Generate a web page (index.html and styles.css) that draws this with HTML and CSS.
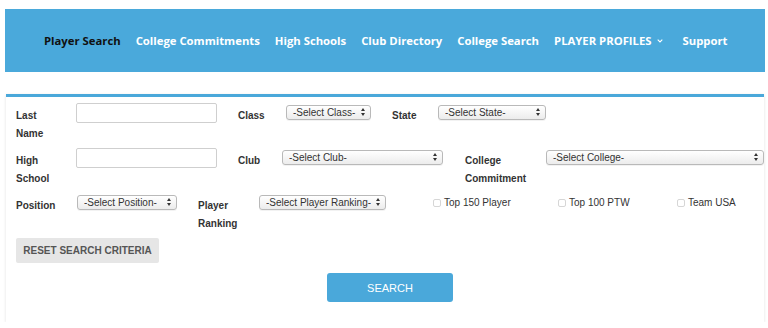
FILE: index.html
```html
<!DOCTYPE html>
<html>
<head>
<meta charset="utf-8">
<link rel="stylesheet" href="styles.css">
</head>
<body>
<div class="page">
  <nav class="nav">
    <a class="nav-item active">Player Search</a>
    <a class="nav-item">College Commitments</a>
    <a class="nav-item">High Schools</a>
    <a class="nav-item">Club Directory</a>
    <a class="nav-item">College Search</a>
    <a class="nav-item">PLAYER PROFILES <svg class="chev" width="6" height="4" viewBox="0 0 6 4"><path d="M0.7 0.7 L3 3 L5.3 0.7" fill="none" stroke="#fff" stroke-width="1.1"/></svg></a>
    <a class="nav-item">Support</a>
  </nav>

  <div class="card">
    <div class="row">
      <label class="lbl w60">Last Name</label>
      <input class="txt" type="text">
      <label class="lbl ml21 w48">Class</label>
      <span class="sel w85"><select><option>-Select Class-</option></select></span>
      <label class="lbl ml21 w46">State</label>
      <span class="sel w108"><select><option>-Select State-</option></select></span>
    </div>
    <div class="row">
      <label class="lbl w60">High School</label>
      <input class="txt" type="text">
      <label class="lbl ml21 w44">Club</label>
      <span class="sel w161"><select><option>-Select Club-</option></select></span>
      <label class="lbl ml22 w81">College Commitment</label>
      <span class="sel w218"><select><option>-Select College-</option></select></span>
    </div>
    <div class="row">
      <label class="lbl w61">Position</label>
      <span class="sel w100"><select><option>-Select Position-</option></select></span>
      <label class="lbl ml21 w61">Player Ranking</label>
      <span class="sel w127"><select><option>-Select Player Ranking-</option></select></span>
      <label class="chk ml47 w125"><span class="box"></span>Top 150 Player</label>
      <label class="chk w119"><span class="box"></span>Top 100 PTW</label>
      <label class="chk"><span class="box"></span>Team USA</label>
    </div>
    <button class="reset" type="button">RESET SEARCH CRITERIA</button>
    <div class="search-wrap">
      <button class="search" type="button">SEARCH</button>
    </div>
  </div>
</div>
</body>
</html>
```

FILE: styles.css
```css
html, body {
  margin: 0;
  padding: 0;
  background: #ffffff;
}

.page {
  padding: 9px 3px 0 5px;
}

.nav {
  height: 63px;
  background: #4aa9db;
  display: flex;
  align-items: center;
  gap: 15px;
  padding-left: 39px;
  font-family: "Open Sans", "DejaVu Sans", sans-serif;
  font-weight: 700;
  font-size: 11.3px;
}

.nav-item {
  color: #ffffff;
  white-space: nowrap;
  display: flex;
  align-items: center;
}

.nav-item.active {
  color: #111111;
}

.chev {
  margin-left: 5px;
  margin-right: 5px;
  margin-top: 1px;
}

.card {
  margin: 22px 1px 0 1px;
  border-top: 3px solid #4aa8da;
  background: #fff;
  box-shadow: 0 1px 3px rgba(0, 0, 0, 0.12);
  padding: 6px 10px 20px 10px;
  font-family: "Liberation Sans", Arial, sans-serif;
  color: #333;
}

.row {
  display: flex;
  align-items: flex-start;
  height: 45px;
}

.lbl {
  font-size: 10px;
  font-weight: 700;
  line-height: 18px;
  margin-top: 4px;
  color: #333;
  flex: none;
  box-sizing: border-box;
  padding-right: 16px;
}

.w44 { width: 44px; }
.w46 { width: 46px; }
.w48 { width: 48px; }
.w60 { width: 60px; }
.w61 { width: 61px; }
.w81 { width: 81px; }
.w85 { width: 85px; }
.w100 { width: 100px; }
.w108 { width: 108px; }
.w119 { width: 119px; }
.w125 { width: 125px; }
.w127 { width: 127px; }
.w161 { width: 161px; }
.w218 { width: 218px; }
.ml21 { margin-left: 21px; }
.ml22 { margin-left: 22px; }
.ml47 { margin-left: 46px; }

.txt {
  flex: none;
  width: 141px;
  height: 20px;
  box-sizing: border-box;
  border: 1px solid #cfcfcf;
  border-radius: 2px;
  background: #fff;
  margin: 0;
  padding: 0 4px;
}

.sel {
  position: relative;
  flex: none;
  display: block;
  height: 15px;
  margin-top: 2px;
}

.sel select {
  appearance: none;
  -webkit-appearance: none;
  display: block;
  width: 100%;
  height: 15px;
  box-sizing: border-box;
  margin: 0;
  padding: 0 14px 0 6px;
  border: 1px solid #b9b9b9;
  border-radius: 3px;
  background: linear-gradient(#ffffff, #ececec);
  font-family: "Liberation Sans", Arial, sans-serif;
  font-size: 10px;
  line-height: 13px;
  color: #333;
  box-shadow: 0 1px 0 rgba(0, 0, 0, 0.05);
}

.sel::before,
.sel::after {
  content: "";
  position: absolute;
  right: 6px;
  width: 0;
  height: 0;
  border-left: 2.5px solid transparent;
  border-right: 2.5px solid transparent;
  pointer-events: none;
}

.sel::before {
  top: 3px;
  border-bottom: 3px solid #333;
}

.sel::after {
  top: 8px;
  border-top: 3px solid #333;
}

.chk {
  flex: none;
  display: flex;
  align-items: center;
  font-size: 10px;
  line-height: 15px;
  margin-top: 2px;
  color: #333;
}

.box {
  width: 8px;
  height: 8px;
  box-sizing: border-box;
  border: 1px solid #d6d6d6;
  border-radius: 2px;
  background: #fff;
  margin-left: 1px;
  margin-right: 3px;
}

.reset {
  display: block;
  width: 143px;
  height: 25px;
  border: none;
  border-radius: 2px;
  background: #e6e6e6;
  color: #555;
  font-family: "Liberation Sans", Arial, sans-serif;
  font-weight: 700;
  font-size: 10px;
  padding: 0;
  margin: 0;
}

.search-wrap {
  display: flex;
  justify-content: center;
  padding-left: 10px;
  margin-top: 10px;
}

.search {
  width: 126px;
  height: 29px;
  border: none;
  border-radius: 3px;
  background: #4aa8da;
  color: #fff;
  font-family: "Liberation Sans", Arial, sans-serif;
  font-size: 11px;
  padding: 0;
  margin: 0;
}
```
